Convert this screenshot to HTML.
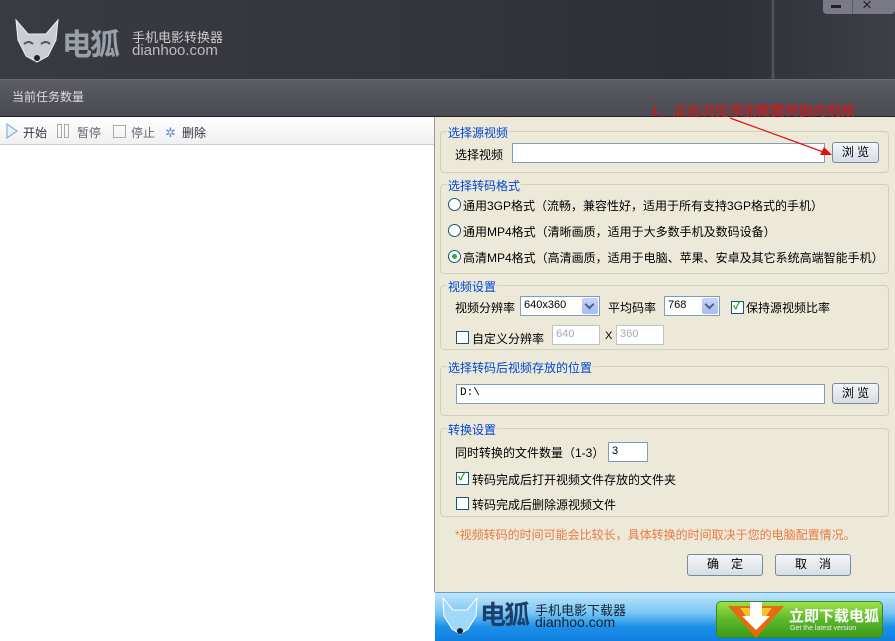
<!DOCTYPE html>
<html><head><meta charset="utf-8"><style>
*{margin:0;padding:0;box-sizing:border-box}
body{width:895px;height:641px;overflow:hidden;position:relative;font-family:"Liberation Sans","Noto Sans CJK SC","WenQuanYi Zen Hei",sans-serif;font-size:12px;color:#000;background:#fff}
.a{position:absolute;white-space:nowrap}
.hdr{left:0;top:0;width:895px;height:79px;background:linear-gradient(90deg,#3a3a42 0%,#34343c 50%,#2e2e36 80%,#3e3e46 100%)}
.bar{left:0;top:79px;width:895px;height:38px;background:linear-gradient(#5c5c64,#4a4a52);border-top:1px solid #6a6a72;border-bottom:1px solid #222}
.right{left:434px;top:117px;width:461px;height:475px;background:#ece9d8;border-left:1px solid #999}
.gb{position:absolute;border:1px solid #d0d0bf;border-radius:4px;left:440px;width:449px}
.lg{position:absolute;color:#0046d5;font-size:12px;background:#ece9d8;padding:0 1px;left:447px}
.inp{position:absolute;background:#fff;border:1px solid #7f9db9;height:20px;font-size:11px;padding:2px 3px}
.btn{position:absolute;border:1px solid #7a8a99;border-radius:3px;background:linear-gradient(#f4f6f8,#d6dde6);text-align:center;font-size:12px;line-height:19px}
.rad{position:absolute;width:13px;height:13px;border:1px solid #1c5180;border-radius:50%;background:#fff}
.cb{position:absolute;width:13px;height:13px;border:1px solid #1c5180;background:#fff}
.sel{position:absolute;background:#fff;border:1px solid #7f9db9;height:20px;font-size:11px;padding:2px 3px}
.sel i{position:absolute;right:1px;top:1px;width:16px;height:16px;background:linear-gradient(#c6d3f7,#a8bdf0);border-radius:2px}
.sel i:after{content:"";position:absolute;left:4px;top:3px;width:5px;height:5px;border-right:2px solid #4d6185;border-bottom:2px solid #4d6185;transform:rotate(45deg)}
</style></head><body>
<div class="a hdr"></div>
<div class="a" style="left:771px;top:0;width:4px;height:79px;background:linear-gradient(90deg,transparent,rgba(120,120,128,.6),transparent)"></div>
<svg class="a" style="left:12px;top:18px" width="50" height="46"><path d="M4 2 L16 16 L34 16 L46 2 L44 22 L36 38 L25 44 L14 38 L6 22Z" fill="#c8ccd4" stroke="#eee"/><path d="M12 26 q5-4 9 0 M29 26 q5-4 9 0" stroke="#555" stroke-width="2" fill="none"/><circle cx="25" cy="40" r="3" fill="#222"/></svg>
<div class="a" style="left:62px;top:20px;font-size:30px;font-weight:bold;color:#9aa0a8;letter-spacing:-2px">电狐</div>
<div class="a" style="left:132px;top:27px;font-size:13px;color:#ccc">手机电影转换器</div>
<div class="a" style="left:132px;top:42px;font-size:15px;color:#bbb">dianhoo.com</div>
<div class="a" style="left:823px;top:0;width:72px;height:14px;background:#7a7a86;border-radius:0 0 4px 4px"></div>
<div class="a" style="left:852px;top:0;width:1px;height:14px;background:#5a5a66"></div>
<div class="a" style="left:831px;top:5px;width:10px;height:3px;background:#222"></div>
<div class="a" style="left:862px;top:-5px;font-size:17px;color:#222">×</div>
<div class="a bar"></div>
<div class="a" style="left:12px;top:88px;color:#ddd;font-size:12px">当前任务数量</div>
<div class="a" style="left:0;top:117px;width:434px;height:28px;background:linear-gradient(#fff,#f0f0f0);border-bottom:1px solid #ccc"></div>
<svg class="a" style="left:6px;top:123px" width="12" height="16"><path d="M1 1 L11 8 L1 15Z" fill="#e8f0fa" stroke="#7aa0d0"/></svg>
<div class="a" style="left:23px;top:124px;color:#334">开始</div>
<div class="a" style="left:57px;top:124px;width:5px;height:14px;border:1px solid #aaa"></div>
<div class="a" style="left:64px;top:124px;width:5px;height:14px;border:1px solid #aaa"></div>
<div class="a" style="left:77px;top:124px;color:#667">暂停</div>
<div class="a" style="left:113px;top:125px;width:13px;height:13px;border:1px solid #aaa"></div>
<div class="a" style="left:131px;top:124px;color:#667">停止</div>
<div class="a" style="left:165px;top:125px;color:#6a8fd0;font-size:13px">✲</div>
<div class="a" style="left:182px;top:124px;color:#334">删除</div>
<div class="a right"></div>

<div class="gb" style="top:131px;height:42px"></div><div class="a lg" style="top:124px">选择源视频</div>
<div class="a" style="left:455px;top:146px">选择视频</div>
<div class="inp" style="left:512px;top:143px;width:313px"></div>
<div class="btn" style="left:832px;top:142px;width:47px;height:21px">浏 览</div>

<div class="gb" style="top:184px;height:90px"></div><div class="a lg" style="top:177px">选择转码格式</div>
<div class="rad" style="left:448px;top:198px"></div><div class="a" style="left:463px;top:197px">通用3GP格式（流畅，兼容性好，适用于所有支持3GP格式的手机）</div>
<div class="rad" style="left:448px;top:224px"></div><div class="a" style="left:463px;top:223px">通用MP4格式（清晰画质，适用于大多数手机及数码设备）</div>
<div class="rad" style="left:448px;top:250px"></div><div class="a" style="left:452px;top:254px;width:5px;height:5px;border-radius:50%;background:#3a3"></div><div class="a" style="left:463px;top:249px">高清MP4格式（高清画质，适用于电脑、苹果、安卓及其它系统高端智能手机）</div>

<div class="gb" style="top:285px;height:65px"></div><div class="a lg" style="top:278px">视频设置</div>
<div class="a" style="left:455px;top:299px">视频分辨率</div>
<div class="sel" style="left:520px;top:296px;width:80px">640x360<i></i></div>
<div class="a" style="left:608px;top:299px">平均码率</div>
<div class="sel" style="left:664px;top:296px;width:56px">768<i></i></div>
<div class="cb" style="left:731px;top:301px"></div><div class="a" style="left:733px;top:297px;color:#21a121;font-size:11px;font-weight:bold">✓</div>
<div class="a" style="left:746px;top:299px">保持源视频比率</div>
<div class="cb" style="left:456px;top:331px"></div><div class="a" style="left:472px;top:330px">自定义分辨率</div>
<div class="inp" style="left:552px;top:325px;width:48px;color:#aaa;border-color:#b8c4cc">640</div>
<div class="a" style="left:605px;top:330px;font-size:11px">X</div>
<div class="inp" style="left:616px;top:325px;width:48px;color:#aaa;border-color:#b8c4cc">360</div>

<div class="gb" style="top:366px;height:50px"></div><div class="a lg" style="top:359px">选择转码后视频存放的位置</div>
<div class="inp" style="left:456px;top:384px;width:369px;font-family:'Liberation Mono',monospace">D:\</div>
<div class="btn" style="left:832px;top:383px;width:47px;height:21px">浏 览</div>

<div class="gb" style="top:428px;height:89px"></div><div class="a lg" style="top:421px">转换设置</div>
<div class="a" style="left:455px;top:444px">同时转换的文件数量（1-3）</div>
<div class="inp" style="left:608px;top:442px;width:40px">3</div>
<div class="cb" style="left:456px;top:472px"></div><div class="a" style="left:458px;top:468px;color:#21a121;font-size:11px;font-weight:bold">✓</div>
<div class="a" style="left:472px;top:471px">转码完成后打开视频文件存放的文件夹</div>
<div class="cb" style="left:456px;top:497px"></div><div class="a" style="left:472px;top:496px">转码完成后删除源视频文件</div>

<div class="a" style="left:455px;top:526px;color:#ea7a44">*视频转码的时间可能会比较长，具体转换的时间取决于您的电脑配置情况。</div>
<div class="btn" style="left:687px;top:554px;width:76px;height:22px">确　定</div>
<div class="btn" style="left:775px;top:554px;width:76px;height:22px">取　消</div>

<div class="a" style="left:651px;top:101px;color:#e01010;font-size:14px">1、点击浏览添加需要转换的视频</div>
<svg class="a" style="left:720px;top:115px" width="120" height="50"><line x1="10" y1="3" x2="106" y2="38" stroke="#e01010" stroke-width="1.2"/><path d="M112 40 L100 40 L104 32Z" fill="#e01010"/></svg>

<div class="a" style="left:435px;top:592px;width:460px;height:49px;background:linear-gradient(#bfe4fb 0%,#7cc8f4 40%,#1e90e8 70%,#1080e0);border-top:1px solid #5aa0d8"></div>
<svg class="a" style="left:440px;top:596px" width="40" height="44"><path d="M3 2 L13 14 L27 14 L37 2 L36 20 L28 33 L20 38 L12 33 L4 20Z" fill="#9fd8f8" stroke="#fff"/><circle cx="20" cy="35" r="3" fill="#123"/></svg>
<div class="a" style="left:480px;top:595px;font-size:26px;font-weight:bold;color:#1a3f6a;letter-spacing:-2px">电狐</div>
<div class="a" style="left:535px;top:600px;font-size:13px;color:#123">手机电影下载器</div>
<div class="a" style="left:535px;top:614px;font-size:14px;color:#123">dianhoo.com</div>
<div class="a" style="left:716px;top:601px;width:167px;height:37px;border-radius:5px;background:linear-gradient(#9ee04a,#5cb82a 50%,#3d9a18);border:1px solid #3a8a1a"></div>
<svg class="a" style="left:726px;top:598px" width="60" height="42"><path d="M2 8 L58 8 L30 40Z" fill="#e66a10"/><path d="M14 10 L46 10 L30 32Z" fill="#f7c230"/><path d="M24 4 L36 4 L36 18 L44 18 L30 32 L16 18 L24 18Z" fill="#fff"/></svg>
<div class="a" style="left:789px;top:605px;font-size:15px;font-weight:bold;color:#fff">立即下载电狐</div>
<div class="a" style="left:790px;top:625px;font-size:7px;color:#eef">Get the latest version</div>
</body></html>
